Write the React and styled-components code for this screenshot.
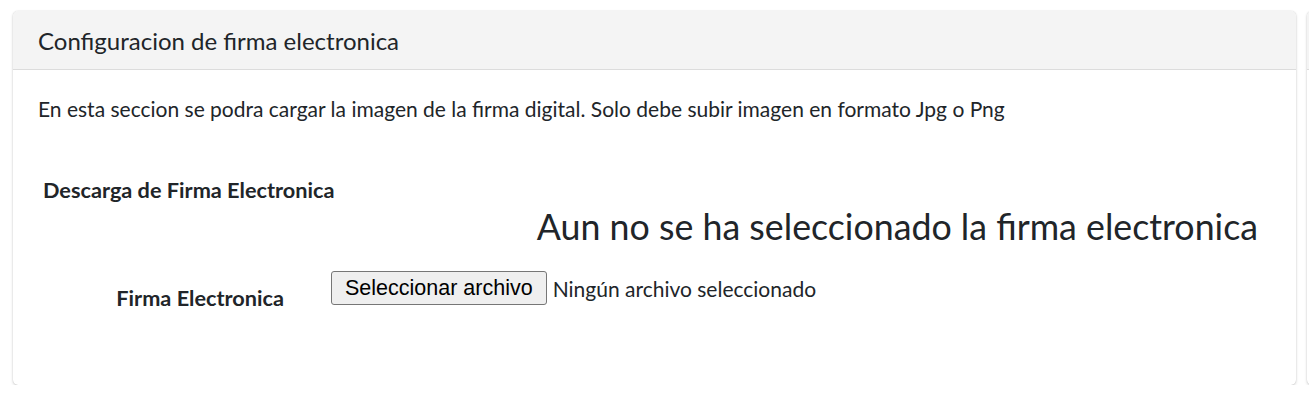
import React from "react";
import styled, { createGlobalStyle } from "styled-components";

const GlobalStyle = createGlobalStyle`
  html, body {
    margin: 0;
    padding: 0;
    background: #ffffff;
    overflow: hidden;
  }

  body {
    font-family: "Source Sans Pro", Lato, "Liberation Sans", sans-serif;
    font-size: 21px;
    color: #212529;
  }
`;

const Page = styled.div`
  display: flex;
  gap: 11px;
  padding: 11px 0 0 13px;
  width: max-content;
`;

const Card = styled.section`
  flex-shrink: 0;
  width: ${(p) => p.width}px;
  background: #fff;
  border-radius: 5px;
  box-shadow: 0 0 1px rgba(0, 0, 0, 0.2), 0 1px 3px rgba(0, 0, 0, 0.18);
  overflow: hidden;
`;

const CardHeader = styled.header`
  height: 58px;
  display: flex;
  align-items: center;
  padding: 0 25px;
  background: #f4f4f4;
  border-bottom: 1px solid #dcdcdc;
`;

const CardTitle = styled.h3`
  margin: 0;
  font-size: 24px;
  font-weight: 400;
  color: #212529;
`;

const CardBody = styled.div`
  padding: 26px 25px 74px;
`;

const Intro = styled.p`
  margin: 0 0 55px;
  line-height: 26px;
`;

const SectionTitle = styled.h5`
  margin: 0 0 0 5px;
  font-size: 21.7px;
  font-weight: 700;
  line-height: 26px;
`;

const Preview = styled.div`
  display: flex;
  justify-content: flex-end;
  padding-right: 13px;
  font-size: 35.75px;
  font-weight: 400;
  line-height: 48px;
  margin-bottom: 14px;
`;

const FormRow = styled.div`
  display: grid;
  grid-template-columns: 293px 1fr;
  align-items: center;
`;

const Label = styled.label`
  text-align: right;
  padding-right: 47px;
  padding-top: 20px;
  font-size: 21.7px;
  font-weight: 700;
`;

const FilePicker = styled.div`
  display: flex;
  align-items: center;
  gap: 6px;
`;

const FileButton = styled.button`
  height: 34px;
  padding: 0 13px;
  font-family: "Liberation Sans", Arial, sans-serif;
  font-size: 21.5px;
  color: #000;
  background: #efefef;
  border: 1px solid #767676;
  border-radius: 3px;
`;

const FileName = styled.span`
  color: #212529;
`;

function App() {
  return (
    <>
      <GlobalStyle />
      <Page>
        <Card width={1283}>
          <CardHeader>
            <CardTitle>Configuracion de firma electronica</CardTitle>
          </CardHeader>
          <CardBody>
            <Intro>
              En esta seccion se podra cargar la imagen de la firma digital. Solo debe subir
              imagen en formato Jpg o Png
            </Intro>
            <SectionTitle>Descarga de Firma Electronica</SectionTitle>
            <Preview>Aun no se ha seleccionado la firma electronica</Preview>
            <FormRow>
              <Label>Firma Electronica</Label>
              <FilePicker>
                <FileButton type="button">Seleccionar archivo</FileButton>
                <FileName>Ningún archivo seleccionado</FileName>
              </FilePicker>
            </FormRow>
          </CardBody>
        </Card>
        <Card width={600}>
          <CardHeader />
        </Card>
      </Page>
    </>
  );
}

export default App;
